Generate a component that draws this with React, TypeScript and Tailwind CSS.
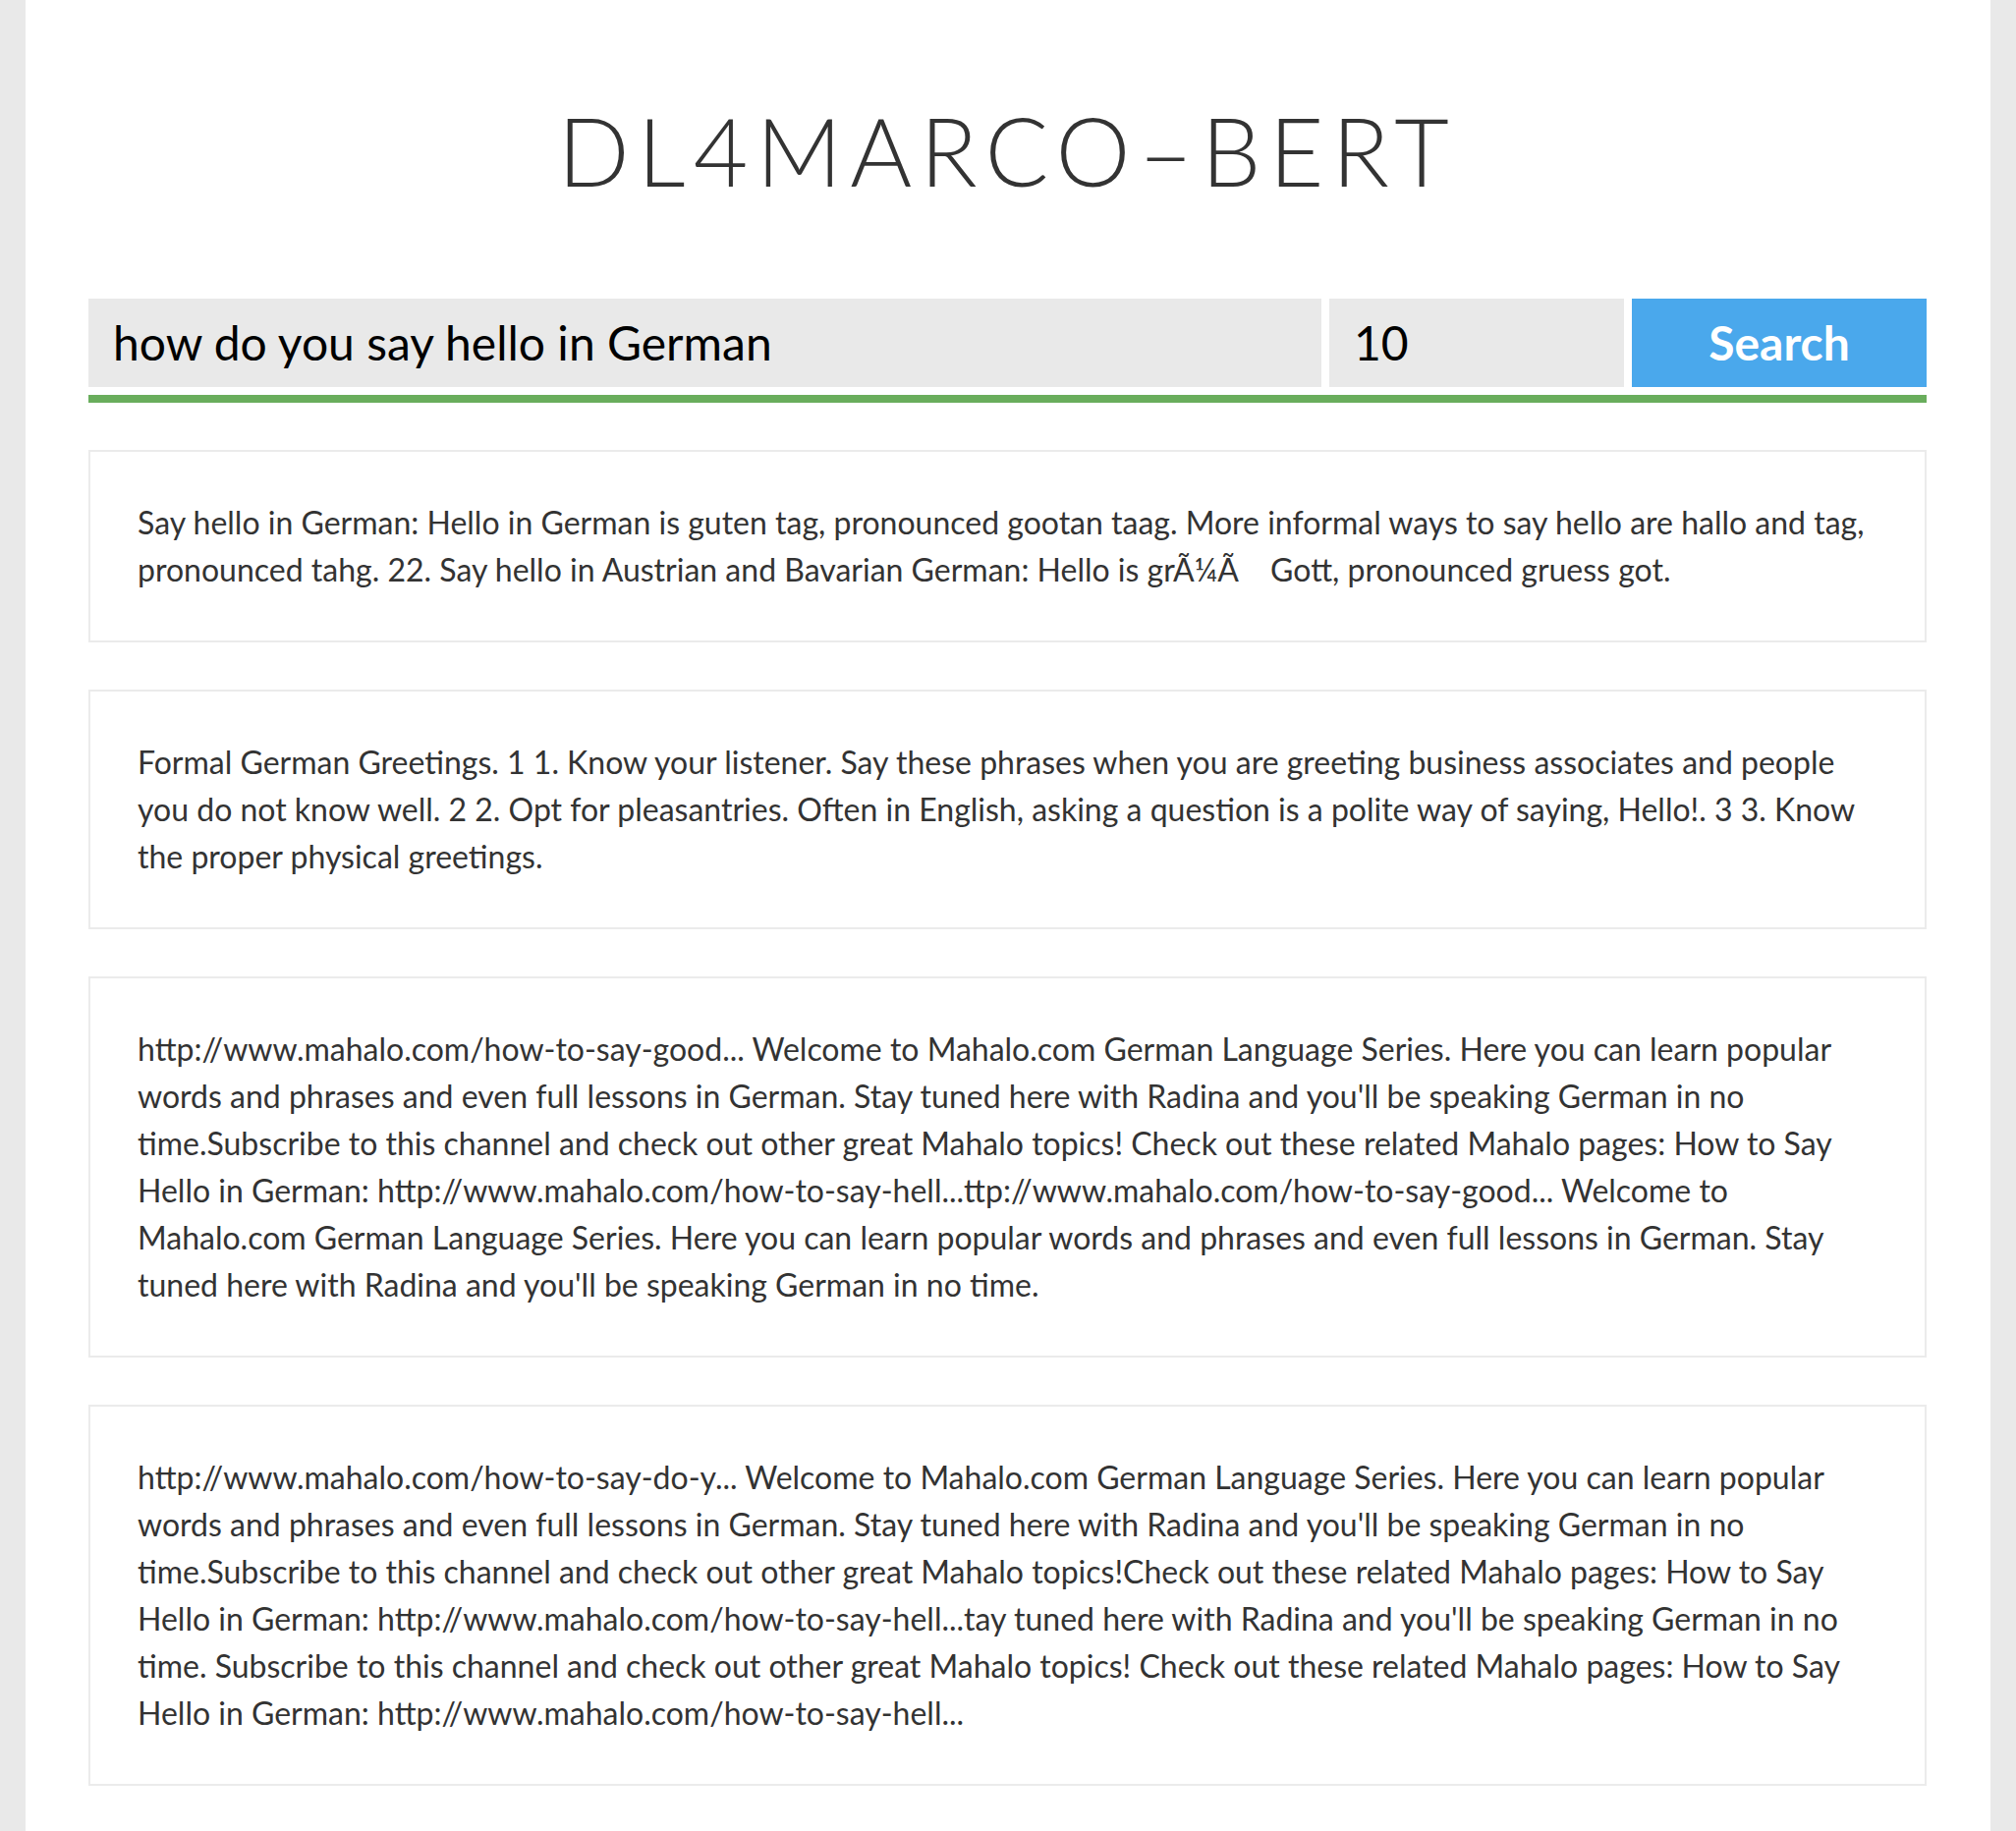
const results = [
  'Say hello in German: Hello in German is guten tag, pronounced gootan taag. More informal ways to say hello are hallo and tag, pronounced tahg. 22. Say hello in Austrian and Bavarian German: Hello is grÃ¼Ã\u2003 Gott, pronounced gruess got.',
  'Formal German Greetings. 1 1. Know your listener. Say these phrases when you are greeting business associates and people you do not know well. 2 2. Opt for pleasantries. Often in English, asking a question is a polite way of saying, Hello!. 3 3. Know the proper physical greetings.',
  "http://www.mahalo.com/how-to-say-good... Welcome to Mahalo.com German Language Series. Here you can learn popular words and phrases and even full lessons in German. Stay tuned here with Radina and you'll be speaking German in no time.Subscribe to this channel and check out other great Mahalo topics! Check out these related Mahalo pages: How to Say Hello in German: http://www.mahalo.com/how-to-say-hell...ttp://www.mahalo.com/how-to-say-good... Welcome to Mahalo.com German Language Series. Here you can learn popular words and phrases and even full lessons in German. Stay tuned here with Radina and you'll be speaking German in no time.",
  "http://www.mahalo.com/how-to-say-do-y... Welcome to Mahalo.com German Language Series. Here you can learn popular words and phrases and even full lessons in German. Stay tuned here with Radina and you'll be speaking German in no time.Subscribe to this channel and check out other great Mahalo topics!Check out these related Mahalo pages: How to Say Hello in German: http://www.mahalo.com/how-to-say-hell...tay tuned here with Radina and you'll be speaking German in no time. Subscribe to this channel and check out other great Mahalo topics! Check out these related Mahalo pages: How to Say Hello in German: http://www.mahalo.com/how-to-say-hell...",
]

export default function App() {
  return (
    <div className="min-h-screen bg-[#e9e9e9] px-[26px] font-['Lato',sans-serif]">
      <div className="bg-white min-h-screen pl-[64px] pr-[65px] pt-[105px] pb-[47px]">
        <h1 className="text-center text-[96px] leading-[96px] font-light tracking-[0.086em] text-[#333]">
          DL4MARCO–BERT
        </h1>

        {/* search bar */}
        <div className="mt-[103px] flex gap-2 h-[90px]">
          <input
            className="flex-1 min-w-0 bg-[#e9e9e9] px-[25px] text-[48px] text-black outline-none"
            defaultValue="how do you say hello in German"
          />
          <input
            className="w-[300px] bg-[#e9e9e9] px-[25px] text-[48px] text-black outline-none"
            defaultValue="10"
          />
          <button className="w-[300px] bg-[#4aa8ec] text-white text-[48px] font-bold">
            Search
          </button>
        </div>
        <div className="mt-2 h-2 bg-[#69ad5c]" />

        <div className="mt-[48px] flex flex-col gap-[48px]">
          {results.map((text, i) => (
            <div key={i} className="border-2 border-[#ebebeb] p-12">
              <p className="text-[32px] leading-[48px] text-[#333]">{text}</p>
            </div>
          ))}
        </div>
      </div>
    </div>
  )
}
